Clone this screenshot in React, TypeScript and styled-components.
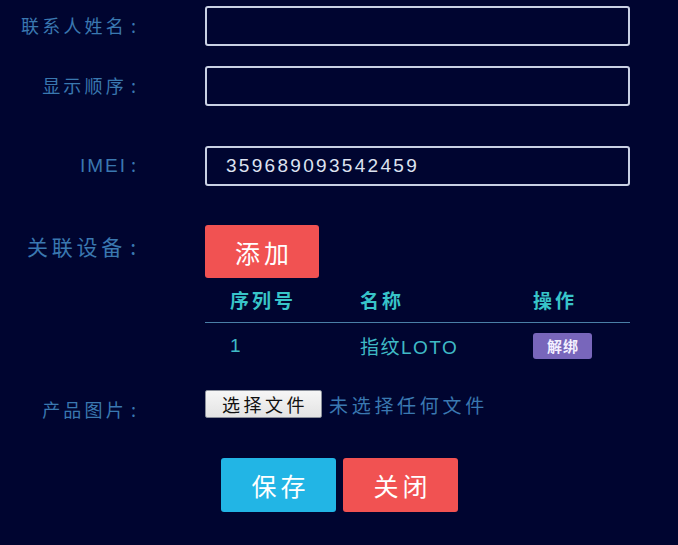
import React from "react";
import styled, { createGlobalStyle } from "styled-components";

const GlobalStyle = createGlobalStyle`
	html, body {
		margin: 0;
		padding: 0;
		background: #000530;
	}
	body {
		font-family: "Liberation Sans", "Noto Sans CJK SC", sans-serif;
	}
`;

const Page = styled.div`
	width: 678px;
	min-height: 545px;
	box-sizing: border-box;
	padding-top: 6px;
	background: #000530;
`;

const FormRow = styled.div<{ $gap?: number; $align?: string }>`
	display: flex;
	align-items: ${(p) => p.$align || "center"};
	margin-bottom: ${(p) => p.$gap ?? 20}px;
`;

const Label = styled.label<{ $size?: number; $top?: number; $spacing?: number }>`
	width: 136px;
	flex-shrink: 0;
	margin-right: 69px;
	text-align: right;
	font-family: "Noto Sans CJK SC", "Liberation Sans", sans-serif;
	font-size: ${(p) => p.$size || 18}px;
	letter-spacing: ${(p) => p.$spacing ?? 3.2}px;
	line-height: 24px;
	color: #3a78b0;
	padding-top: ${(p) => p.$top || 0}px;
	padding-bottom: ${(p) => (p.$top ? 0 : 3)}px;
	white-space: nowrap;
`;

const Colon = styled.span`
	margin-left: 4px;
	letter-spacing: 0;
`;

const Latin = styled.span`
	font-family: "Liberation Sans", sans-serif;
	font-size: 19px;
	letter-spacing: 2px;
`;

const Field = styled.div`
	width: 425px;
`;

const TextInput = styled.input`
	width: 425px;
	height: 40px;
	box-sizing: border-box;
	border: 2px solid #c9d1e3;
	border-radius: 3px;
	background: transparent;
	padding: 0 0 0 19px;
	color: #dde3f0;
	font-family: "Liberation Sans", sans-serif;
	font-size: 19px;
	letter-spacing: 2.3px;
	outline: none;
`;

const Button = styled.button<{ $color: string; $w?: number; $h?: number; $size?: number }>`
	width: ${(p) => p.$w || 115}px;
	height: ${(p) => p.$h || 54}px;
	border: none;
	border-radius: 3px;
	background: ${(p) => p.$color};
	color: #ffffff;
	font-family: "Noto Sans CJK SC", sans-serif;
	font-size: ${(p) => p.$size || 25}px;
	letter-spacing: 4px;
	padding: 0 0 0 4px;
	cursor: pointer;
`;

const Table = styled.div`
	margin-top: 5px;
	width: 425px;
`;

const TableRow = styled.div<{ $head?: boolean }>`
	display: grid;
	grid-template-columns: 130px 173px 1fr;
	align-items: center;
	padding-left: 25px;
	height: ${(p) => (p.$head ? 40 : 47)}px;
	padding-bottom: ${(p) => (p.$head ? 7 : 2)}px;
	border-bottom: ${(p) => (p.$head ? "1.5px solid #4a7fa6" : "none")};
	box-sizing: border-box;
`;

const Cell = styled.div<{ $head?: boolean }>`
	font-family: "Liberation Sans", "Noto Sans CJK SC", sans-serif;
	font-size: 19px;
	font-weight: ${(p) => (p.$head ? 700 : 400)};
	letter-spacing: ${(p) => (p.$head ? 3 : 1.5)}px;
	color: ${(p) => (p.$head ? "#38c4c9" : "#3fbac6")};
	white-space: nowrap;
`;

const ActionCell = styled.div`
	display: flex;
	align-items: center;
`;

const Badge = styled.span`
	display: inline-flex;
	align-items: center;
	justify-content: center;
	width: 59px;
	height: 26px;
	border-radius: 3px;
	background: #7866bb;
	color: #f3f0ff;
	font-family: "Noto Sans CJK SC", sans-serif;
	font-size: 15px;
	font-weight: 700;
	letter-spacing: 1px;
	padding-left: 1px;
	box-sizing: border-box;
`;

const FilePick = styled.div`
	display: flex;
	align-items: center;
	height: 28px;
`;

const FileButton = styled.button`
	width: 117px;
	height: 28px;
	box-sizing: border-box;
	border: 1px solid #8a8f9a;
	border-radius: 2px;
	background: linear-gradient(#f6f6f6, #e3e3e3);
	color: #111;
	font-family: "Noto Sans CJK SC", sans-serif;
	font-size: 18px;
	letter-spacing: 3.5px;
	padding: 0 0 0 3px;
`;

const FileHint = styled.span`
	margin-left: 7px;
	font-family: "Noto Sans CJK SC", sans-serif;
	font-size: 19px;
	letter-spacing: 3.7px;
	color: #3a78b0;
`;

const Actions = styled.div`
	display: flex;
	gap: 7px;
	padding-left: 221px;
`;

const App = () => {
	return (
		<Page>
			<GlobalStyle />
			<FormRow $gap={20}>
				<Label>
					联系人姓名<Colon>:</Colon>
				</Label>
				<TextInput />
			</FormRow>
			<FormRow $gap={40}>
				<Label>
					显示顺序<Colon>:</Colon>
				</Label>
				<TextInput />
			</FormRow>
			<FormRow $gap={39}>
				<Label>
					<Latin>IMEI</Latin>
					<Colon>:</Colon>
				</Label>
				<TextInput defaultValue='359689093542459' />
			</FormRow>
			<FormRow $gap={20} $align='flex-start'>
				<Label $size={21} $top={9} $spacing={3.8}>
					关联设备<Colon>:</Colon>
				</Label>
				<Field>
					<Button $color='#f15252' $w={114} $h={53}>
						添加
					</Button>
					<Table>
						<TableRow $head>
							<Cell $head>序列号</Cell>
							<Cell $head>名称</Cell>
							<Cell $head>操作</Cell>
						</TableRow>
						<TableRow>
							<Cell>1</Cell>
							<Cell>指纹LOTO</Cell>
							<ActionCell>
								<Badge>解绑</Badge>
							</ActionCell>
						</TableRow>
					</Table>
				</Field>
			</FormRow>
			<FormRow $gap={37} $align='flex-start'>
				<Label $top={7}>
					产品图片<Colon>:</Colon>
				</Label>
				<FilePick>
					<FileButton type='button'>选择文件</FileButton>
					<FileHint>未选择任何文件</FileHint>
				</FilePick>
			</FormRow>
			<Actions>
				<Button $color='#22b5e5'>保存</Button>
				<Button $color='#f15252'>关闭</Button>
			</Actions>
		</Page>
	);
};

export default App;
